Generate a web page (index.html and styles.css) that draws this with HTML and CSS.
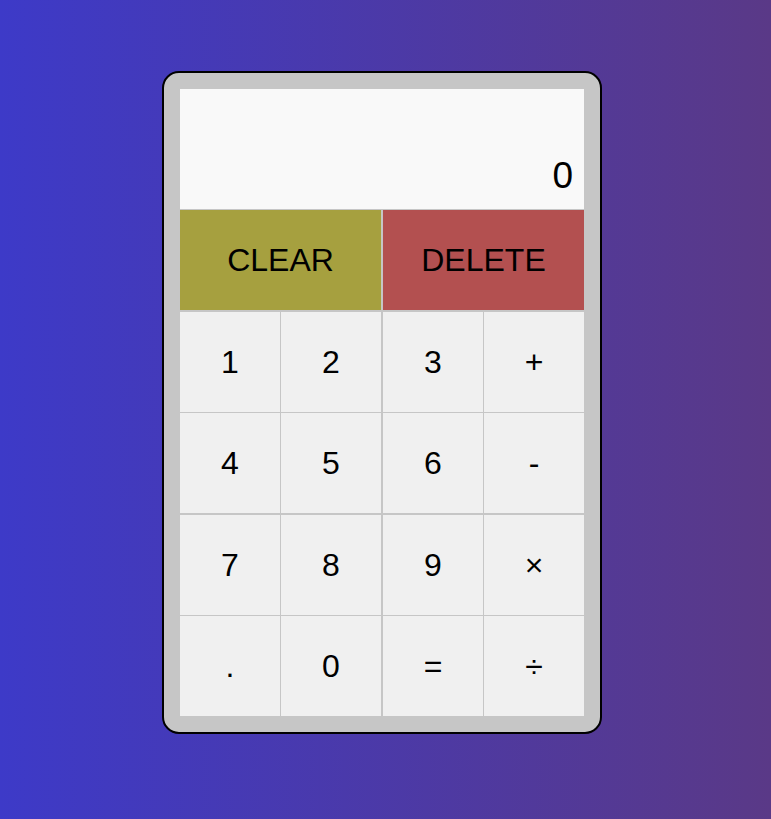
FILE: index.html
```html
<!DOCTYPE html>
<html lang="en">
<head>
<meta charset="utf-8">
<title>Calculator</title>
<link rel="stylesheet" href="styles.css">
</head>
<body>
<main class="page">
  <div class="calculator">
    <div class="grid">
      <div class="display"><span class="current">0</span></div>
      <button class="key clear span-two row-gap">CLEAR</button>
      <button class="key delete span-two row-gap">DELETE</button>
      <button class="key">1</button>
      <button class="key col-gap">2</button>
      <button class="key">3</button>
      <button class="key">+</button>
      <button class="key row-gap">4</button>
      <button class="key col-gap row-gap">5</button>
      <button class="key row-gap">6</button>
      <button class="key row-gap">-</button>
      <button class="key">7</button>
      <button class="key col-gap">8</button>
      <button class="key">9</button>
      <button class="key">×</button>
      <button class="key">.</button>
      <button class="key col-gap">0</button>
      <button class="key">=</button>
      <button class="key">÷</button>
    </div>
  </div>
</main>
</body>
</html>
```
FILE: styles.css
```css
* { box-sizing: border-box; }

html, body {
  margin: 0;
  padding: 0;
}

body {
  min-height: 100vh;
  background: linear-gradient(to right, #3d3ac8, #5a3987);
  font-family: "Liberation Sans", Arial, sans-serif;
}

.page {
  display: flex;
  justify-content: center;
  align-items: flex-start;
  padding: 71px 7px 0 0;
  min-height: 100vh;
}

.calculator {
  background: #c6c6c6;
  border: 2px solid #000;
  border-radius: 17px;
  padding: 16px;
}

.grid {
  display: grid;
  grid-template-columns: 100px 101px 100px 100px;
  grid-template-rows: 120px 101px 100px 101px 100px 100px;
  gap: 1px;
  background: #c6c6c6;
}

.display {
  grid-column: 1 / -1;
  background: #f9f9f9;
  display: flex;
  align-items: flex-end;
  justify-content: flex-end;
  padding: 0 11px 15px 10px;
}

.current {
  font-size: 37px;
  line-height: 1;
  color: #000;
}

.key {
  margin: 0;
  border: none;
  padding: 0;
  background: #f0f0f0;
  color: #000;
  font-family: "Liberation Sans", Arial, sans-serif;
  font-size: 32px;
  cursor: pointer;
}

.span-two { grid-column: span 2; }

.col-gap { margin-right: 1px; }
.row-gap { margin-bottom: 1px; }

.clear {
  background: #a6a03f;
  margin-right: 1px;
}

.delete {
  background: #b35050;
}
```
